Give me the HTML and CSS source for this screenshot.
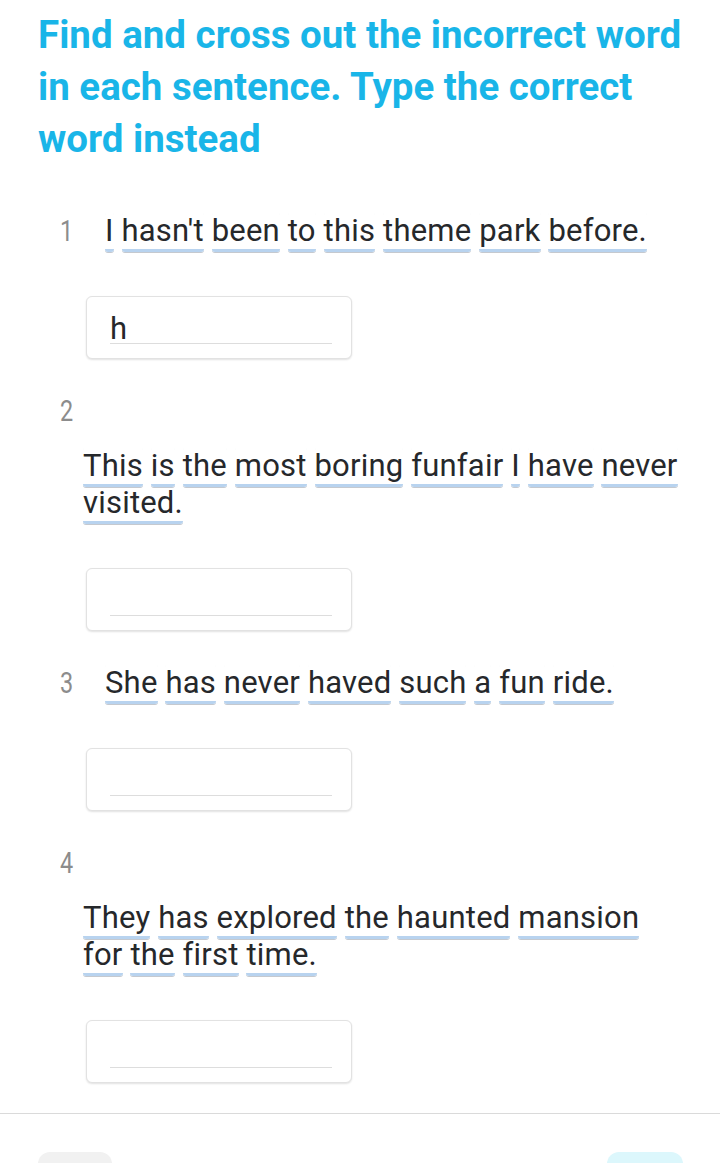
FILE: index.html
```html
<!DOCTYPE html>
<html lang="en">
<head>
<meta charset="utf-8">
<title>Find and cross out the incorrect word</title>
<link rel="stylesheet" href="styles.css">
</head>
<body>
<main class="page">
  <h1 class="title">Find and cross out the incorrect word in each sentence. Type the correct word instead</h1>

  <section class="list">
    <div class="item">
      <div class="num">1</div>
      <p class="sentence"><span class="w">I</span> <span class="w">hasn't</span> <span class="w">been</span> <span class="w">to</span> <span class="w">this</span> <span class="w">theme</span> <span class="w">park</span> <span class="w">before.</span></p>
    </div>
    <div class="answer"><span class="field">h</span></div>

    <div class="item">
      <div class="num">2</div>
      <p class="sentence"><span class="w">This</span> <span class="w">is</span> <span class="w">the</span> <span class="w">most</span> <span class="w">boring</span> <span class="w">funfair</span> <span class="w">I</span> <span class="w">have</span> <span class="w">never</span> <span class="w">visited.</span></p>
    </div>
    <div class="answer"><span class="field"></span></div>

    <div class="item">
      <div class="num">3</div>
      <p class="sentence"><span class="w">She</span> <span class="w">has</span> <span class="w">never</span> <span class="w">haved</span> <span class="w">such</span> <span class="w">a</span> <span class="w">fun</span> <span class="w">ride.</span></p>
    </div>
    <div class="answer"><span class="field"></span></div>

    <div class="item">
      <div class="num">4</div>
      <p class="sentence"><span class="w">They</span> <span class="w">has</span> <span class="w">explored</span> <span class="w">the</span> <span class="w">haunted</span> <span class="w">mansion</span> <span class="w">for</span> <span class="w">the</span> <span class="w">first</span> <span class="w">time.</span></p>
    </div>
    <div class="answer"><span class="field"></span></div>
  </section>

  <footer class="footer">
    <button class="btn btn-back" type="button"></button>
    <button class="btn btn-next" type="button"></button>
  </footer>
</main>
</body>
</html>
```

FILE: styles.css
```css
html, body {
  margin: 0;
  padding: 0;
  background: #ffffff;
}

body {
  font-family: Roboto, "Noto Sans", "Liberation Sans", sans-serif;
  color: #26282b;
}

.page {
  width: 720px;
}

.title {
  margin: 0;
  padding: 9px 30px 0 38px;
  font-family: Roboto, "Liberation Sans", sans-serif;
  font-weight: 700;
  font-size: 38.5px;
  line-height: 52px;
  letter-spacing: 0;
  color: #19b5e8;
}

.list {
  padding: 14px 40px 0 38px;
}

.item {
  display: flex;
  flex-wrap: wrap;
  align-items: baseline;
  row-gap: 18px;
  padding-left: 22px;
  margin-top: 33px;
}

.num {
  width: 22px;
  font-size: 30px;
  line-height: 37px;
  color: #8c8c8c;
  transform: scaleX(0.78);
  transform-origin: left center;
}

.sentence {
  margin: 0 0 0 23px;
  font-size: 31px;
  line-height: 37px;
  letter-spacing: 0.2px;
  color: #26282b;
}

.w {
  border-bottom: 3px solid #b8d3ef;
  border-radius: 3px;
  box-shadow: 0 1px 0 #c5c9cf;
}

.answer {
  display: flex;
  align-items: flex-end;
  box-sizing: border-box;
  width: 266px;
  height: 63px;
  margin: 47px 0 0 48px;
  padding: 0 19px 14px 23px;
  border: 1px solid #e2e2e2;
  border-radius: 6px;
  box-shadow: 0 1px 2px rgba(0, 0, 0, 0.12);
  background: #fff;
}

.field {
  flex: 1;
  height: 34px;
  border-bottom: 1px solid #dddddd;
  font-size: 31px;
  line-height: 39px;
  color: #26282b;
}

.footer {
  display: flex;
  justify-content: space-between;
  margin-top: 30px;
  padding: 38px 37px 0 38px;
  border-top: 1px solid #dadada;
}

.btn {
  width: 74px;
  height: 44px;
  border: none;
  border-radius: 12px;
  padding: 0;
}

.btn-back {
  background: #f1f1f1;
}

.btn-next {
  width: 76px;
  background: #dcf7fc;
}
```
